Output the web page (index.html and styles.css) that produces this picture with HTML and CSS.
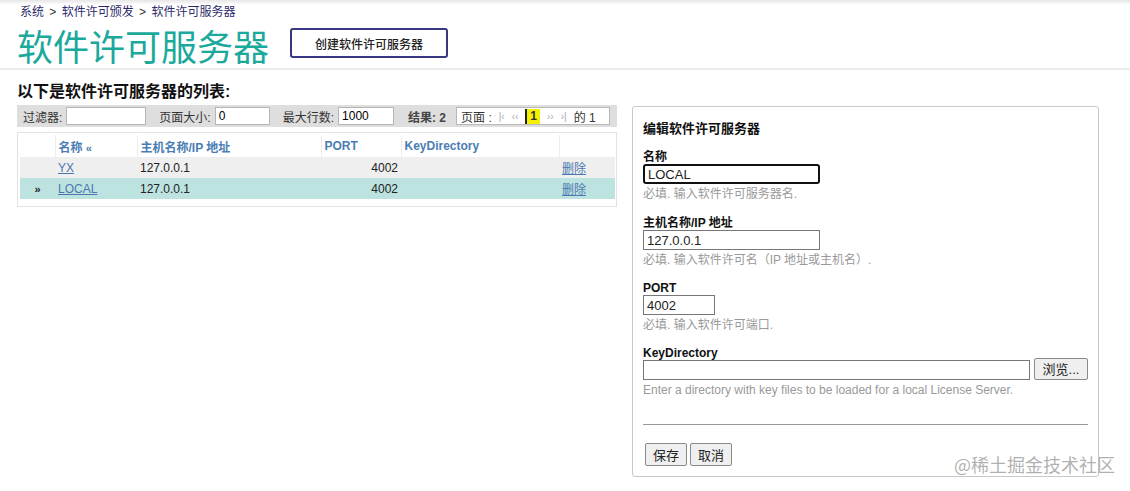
FILE: index.html
```html
<!DOCTYPE html>
<html lang="zh-CN">

<head>
    <meta charset="UTF-8">
    <title>软件许可服务器</title>
    <link rel="stylesheet" href="styles.css">
</head>

<body>
    <div class="topshade"></div>
    <div class="header">
        <div class="crumbs">系统 <span class="sep">&gt;</span> 软件许可颁发 <span class="sep">&gt;</span> 软件许可服务器</div>
        <div class="title-row">
            <h1>软件许可服务器</h1>
            <button class="create-btn">创建软件许可服务器</button>
        </div>
    </div>

    <div class="main">
        <div class="list-col">
            <h2>以下是软件许可服务器的列表:</h2>
            <div class="filterbar">
                <label>过滤器:</label><input class="f-filter" type="text" value="">
                <label class="gap">页面大小:</label><input class="f-size" type="text" value="0">
                <label class="gap">最大行数:</label><input class="f-max" type="text" value="1000">
                <span class="result">结果: 2</span>
                <div class="pager">
                    <span>页面 :</span>
                    <span class="pg">|‹</span>
                    <span class="pg">‹‹</span>
                    <span class="cur">1</span>
                    <span class="pg">››</span>
                    <span class="pg">›|</span>
                    <span>的 1</span>
                </div>
            </div>

            <div class="tablebox">
                <table class="list">
                    <thead>
                        <tr>
                            <th class="c-mark"></th>
                            <th class="c-name">名称 <span class="sort">«</span></th>
                            <th class="c-host">主机名称/IP 地址</th>
                            <th class="c-port">PORT</th>
                            <th class="c-key">KeyDirectory</th>
                            <th class="c-del"></th>
                        </tr>
                    </thead>
                    <tbody>
                        <tr class="odd">
                            <td></td>
                            <td><a href="#">YX</a></td>
                            <td>127.0.0.1</td>
                            <td class="num">4002</td>
                            <td></td>
                            <td><a href="#">删除</a></td>
                        </tr>
                        <tr class="sel">
                            <td class="mark">»</td>
                            <td><a href="#">LOCAL</a></td>
                            <td>127.0.0.1</td>
                            <td class="num">4002</td>
                            <td></td>
                            <td><a href="#">删除</a></td>
                        </tr>
                    </tbody>
                </table>
            </div>
        </div>

        <div class="edit-panel">
            <h3>编辑软件许可服务器</h3>

            <div class="field">
                <label>名称</label>
                <input class="w-name focus" type="text" value="LOCAL">
                <div class="hint">必填. 输入软件许可服务器名.</div>
            </div>
            <div class="field">
                <label>主机名称/IP 地址</label>
                <input class="w-name" type="text" value="127.0.0.1">
                <div class="hint">必填. 输入软件许可名（IP 地址或主机名）.</div>
            </div>
            <div class="field">
                <label>PORT</label>
                <input class="w-port" type="text" value="4002">
                <div class="hint">必填. 输入软件许可端口.</div>
            </div>
            <div class="field">
                <label>KeyDirectory</label>
                <div class="browse-row">
                    <input class="w-dir" type="text" value="">
                    <button class="btn">浏览...</button>
                </div>
                <div class="hint">Enter a directory with key files to be loaded for a local License Server.</div>
            </div>

            <hr>
            <div class="actions">
                <button class="btn">保存</button>
                <button class="btn">取消</button>
            </div>
        </div>
    </div>

    <div class="watermark">@稀土掘金技术社区</div>
</body>

</html>
```

FILE: styles.css
```css
* {
    margin: 0;
    padding: 0;
    box-sizing: border-box;
}

body {
    font-family: "Liberation Sans", "Noto Sans CJK SC", sans-serif;
    font-size: 12px;
    color: #222;
    background: #fff;
    overflow: hidden;
}

.topshade {
    height: 4px;
    background: linear-gradient(to bottom, #e6e6e6, #fafafa);
}

.header {
    height: 66px;
    padding-left: 17px;
    border-bottom: 2px solid #ececec;
}

.crumbs {
    padding-left: 3px;
    line-height: 16px;
    color: #2d2a6b;
    font-size: 12px;
}

.crumbs .sep {
    color: #333;
    margin: 0 2px;
}

.title-row {
    display: flex;
    align-items: center;
    margin-top: 4px;
}

.title-row h1 {
    font-family: "Noto Sans CJK SC", sans-serif;
    font-weight: 400;
    font-size: 36px;
    line-height: 42px;
    color: #1aa99b;
}

.create-btn {
    margin-left: 21px;
    margin-top: -4px;
    width: 158px;
    height: 30px;
    border: 2px solid #393682;
    border-radius: 3px;
    background: #fff;
    font-family: "Liberation Sans", "Noto Sans CJK SC", sans-serif;
    font-size: 12px;
    font-weight: 500;
    color: #222;
}

.main {
    display: flex;
    align-items: flex-start;
    padding-left: 17px;
}

.list-col {
    width: 600px;
}

.list-col h2 {
    font-size: 16px;
    line-height: 20px;
    margin-top: 12px;
    color: #111;
}

.filterbar {
    display: flex;
    align-items: center;
    height: 22px;
    margin-top: 3px;
    padding-left: 6px;
    background: #dedede;
    color: #333;
}

.filterbar label {
    margin-right: 4px;
}

.filterbar .gap {
    margin-left: 13px;
}

.filterbar input {
    height: 18px;
    border: 1px solid #b5b5b5;
    padding: 0 3px;
    font-family: "Liberation Sans", sans-serif;
    font-size: 12px;
    background: #fff;
}

.f-filter {
    width: 80px;
}

.f-size {
    width: 55px;
}

.f-max {
    width: 56px;
}

.result {
    margin-left: 14px;
    font-weight: bold;
    color: #444;
}

.pager {
    display: flex;
    align-items: center;
    gap: 7px;
    height: 18px;
    margin-left: 10px;
    padding: 0 4px;
    width: 154px;
    background: #fff;
    border: 1px solid #b8b8b8;
}

.pager .pg {
    color: #aaa;
    font-size: 10px;
}

.pager .cur {
    background: #f5f000;
    border-left: 2px solid #222;
    font-weight: bold;
    padding: 0 3px;
    line-height: 15px;
}

.tablebox {
    margin-top: 5px;
    border: 1px solid #e2e2e2;
    padding: 2px 1px 7px 2px;
}

table.list {
    width: 100%;
    border-collapse: collapse;
}

.list th {
    height: 22px;
    text-align: left;
    padding: 0 3px;
    color: #4a7db3;
    font-size: 12px;
    border-right: 1px solid #ececec;
}

.list th:last-child {
    border-right: none;
}

.list td {
    height: 21px;
    padding: 0 3px;
    color: #222;
}

.list tr.odd td {
    background: #efefef;
}

.list tr.sel td {
    background: #bde3e1;
}

.list a {
    color: #4b78b0;
}

.c-mark {
    width: 35px;
}

.c-name {
    width: 82px;
}

.c-host {
    width: 184px;
}

.c-port {
    width: 80px;
}

.c-key {
    width: 158px;
}

.list td.num {
    text-align: right;
}

.list td.mark {
    text-align: center;
    font-weight: bold;
    font-size: 11px;
}

.sort {
    font-size: 11px;
}

.edit-panel {
    width: 467px;
    height: 371px;
    margin-left: 15px;
    margin-top: 36px;
    border: 1px solid #c8c8c8;
    border-radius: 3px;
    padding: 14px 10px 0 10px;
}

.edit-panel h3 {
    font-size: 13px;
    line-height: 16px;
    margin-bottom: 13px;
    color: #111;
}

.field {
    margin-bottom: 12px;
}

.field:first-of-type {
    margin-bottom: 13px;
}

.field label {
    display: block;
    font-weight: bold;
    line-height: 14px;
    color: #111;
}

.field input {
    display: block;
    height: 20px;
    border: 1px solid #777;
    padding: 0 3px;
    font-family: "Liberation Sans", sans-serif;
    font-size: 13px;
    color: #222;
    background: #fff;
}

.field input.focus {
    border: 2px solid #111;
    border-radius: 3px;
}

.w-name {
    width: 177px;
}

.w-port {
    width: 72px;
}

.w-dir {
    width: 387px;
}

.hint {
    margin-top: 2px;
    color: #999;
    line-height: 17px;
    font-size: 12px;
}

.browse-row {
    display: flex;
    align-items: center;
    gap: 4px;
}

.btn {
    height: 22px;
    padding: 0 6px;
    border: 1px solid #8a8a8a;
    border-radius: 2px;
    background: #efefef;
    font-family: "Liberation Sans", "Noto Sans CJK SC", sans-serif;
    font-size: 13px;
    color: #222;
}

.browse-row .btn {
    width: 54px;
    margin-top: -3px;
}

.edit-panel hr {
    margin-top: 25px;
    border: none;
    border-top: 1px solid #999;
}

.actions {
    display: flex;
    gap: 3px;
    margin-top: 18px;
    padding-left: 2px;
}

.actions .btn {
    width: 42px;
    height: 23px;
    padding: 0;
}

.watermark {
    position: absolute;
    left: 954px;
    top: 451px;
    font-family: "Noto Sans CJK SC", sans-serif;
    font-size: 18px;
    color: rgba(150, 150, 150, 0.75);
}
```
